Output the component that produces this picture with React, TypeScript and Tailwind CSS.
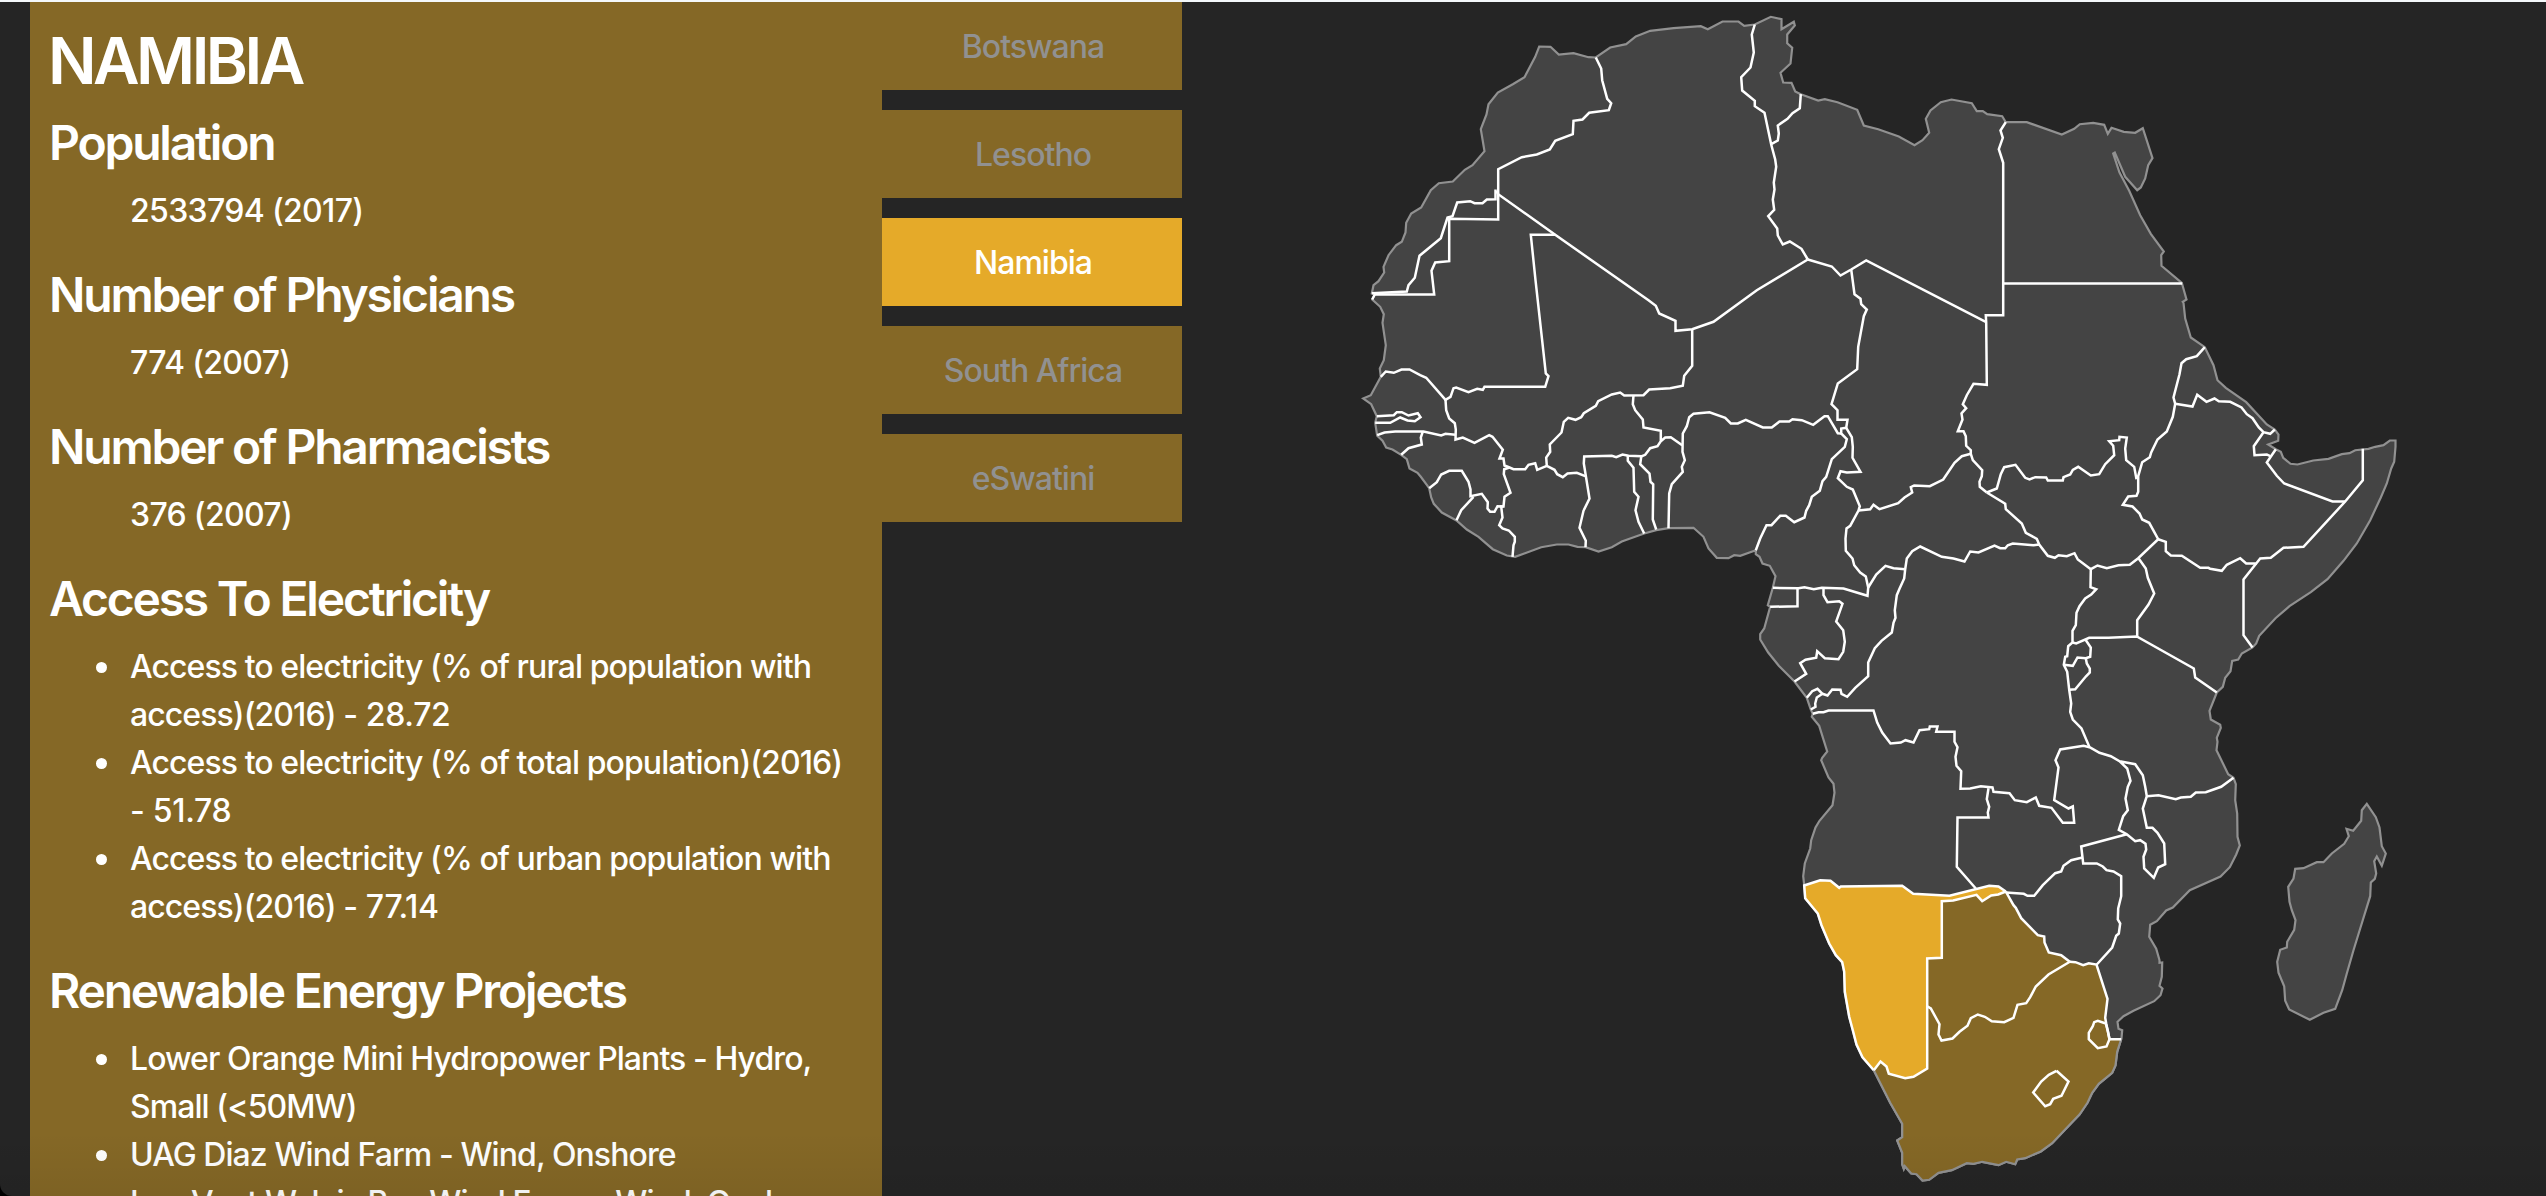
import React, { useState } from "react";

type Segment = [ox: number, oy: number, points: string];

/* Geometry is digitised in tiles at three units per pixel; each segment names its tile origin. */
const NW = [1340, 0] as const;
const NE = [1720, 0] as const;
const RS = [2150, 260] as const;
const WA = [1340, 280] as const;
const CE = [1740, 300] as const;
const HO = [2040, 300] as const;
const CO = [1740, 580] as const;
const EA = [2020, 580] as const;
const SO = [1780, 860] as const;

const seg = (o: readonly [number, number], points: string): Segment => [o[0], o[1], points];

const project = (segments: Segment[]) =>
  segments
    .map(([ox, oy, points]) =>
      points
        .trim()
        .split(/\s+/)
        .map((p) => {
          const [x, y] = p.split(",").map(Number);
          return `${(ox + (x + 0.5) / 3).toFixed(1)},${(oy + (y + 0.5) / 3).toFixed(1)}`;
        })
        .join(" "),
    )
    .join(" ");

const reversed = (points: string) => points.split(" ").reverse().join(" ");

const southCoast =
  "1023,537 1011,575 1006,616 996,638 956,671 936,698 922,728 898,763 850,813 816,849 782,874 735,894 711,898 705,912 678,905 655,915 606,905 580,911 560,909 515,930 475,938 447,959 427,961 409,942 393,940 374,918 371,926 366,912 366,878 351,841 366,831 366,791 330,728 281,630";
const namibiaCoast =
  "281,630 247,591 229,553 218,510 207,470 194,395 192,335 186,306 167,285 147,250 124,195 113,160 75,114 72,76";
const namibiaNorth =
  "72,76 120,60 151,62 177,83 182,79 366,77 399,101 508,107 627,77 655,79 677,94";
const capriviSouth = "677,94 654,103 633,106 606,123 589,104 519,121 485,123 485,293 441,295 441,438";
const orangeRiver = "441,438 441,625 400,650 375,654 326,641 319,619 301,604 281,630";
const zimBotswana =
  "677,94 700,135 707,143 723,174 773,225 792,229 793,247 806,277 843,285 869,305";
const molopo =
  "869,305 805,343 767,379 750,411 738,429 712,434 700,473 672,486 635,483 614,470 593,463 572,474 562,497 538,515 517,535 484,541 475,523 478,492 452,445 441,438";
const limpopoEast = "869,305 886,306 909,315 926,309 949,313 982,416 975,473 978,490 988,537 1023,537";
const eswatini =
  "977,490 953,482 942,486 938,498 926,518 926,537 953,564 979,559 988,537 983,512";
const lesotho =
  "829,632 865,664 844,707 819,716 810,732 795,738 759,697 783,664 806,644";

const coast: Segment[] = [
  seg(
    NW,
    "95,880 100,855 115,843 132,817 130,800 145,765 168,735 185,725 196,697 198,668 213,640 243,622 272,570 296,549 338,544 374,509 397,495 433,453 422,387 439,343 445,312 473,277 518,252 553,231 585,170 597,139 631,140 656,163 700,159 745,171 767,172 810,142 858,132 887,109 930,92 1000,84 1082,78 1103,87 1147,64 1195,64",
  ),
  seg(
    NE,
    "55,64 72,77 104,73 152,50 184,57 184,87 221,65 224,76 201,103 201,129 216,143 211,190 181,218 189,247 214,248 225,274 242,282 294,301 314,297 352,306 411,329 431,376 474,387 536,409 583,435 607,420 627,398 617,356 631,331 662,306 694,298 755,309 770,333 788,333 801,342 846,348 857,366 920,366 1025,403 1062,386 1079,372 1119,368 1152,374 1163,401 1174,383 1211,395 1245,398 1268,384 1297,474 1284,495 1275,535 1262,562 1251,570 1215,530 1184,457 1179,460 1198,517 1227,572 1260,645 1292,701 1331,754 1323,765 1324,797",
  ),
  seg(RS, "95,68 109,118 98,125"),
  seg(
    HO,
    "430,8 435,55 452,112 494,141 520,195 532,240 557,263 618,306 680,373 704,388 715,403 714,422 684,433 707,447 722,455 729,473 751,491 772,493 819,481 865,476 905,462 928,459 945,450 985,446 1005,440 1030,435 1049,421 1066,421 1066,440 1062,485 1053,505 1040,550 1022,592 990,660 950,730 910,782 862,837 812,876 748,918 706,954 657,1007 648,1030 637,1042",
  ),
  seg(
    EA,
    "697,202 665,220 654,238 636,242 631,273 615,293 608,320 590,337 568,392 572,418 600,434 602,443 590,473 592,485 589,510 624,582 640,593 647,612 645,660 651,700 652,770 659,796 648,823 629,861 601,889 509,930 458,982 438,991 410,1023 390,1034 387,1070 408,1106 418,1140 418,1148 426,1147 425,1190 418,1217 427,1225 421,1245 402,1263 340,1292 310,1308 292,1325 295,1346 306,1350 304,1375",
  ),
  seg(SO, southCoast),
  seg(SO, namibiaCoast),
  seg(
    CO,
    "192,915 189,888 194,850 210,805 213,780 226,742 238,722 277,675 283,638 280,611 265,592 243,540 246,533 261,514 237,437 215,410 218,401 212,388 200,353 163,304 116,257 84,217 60,178 60,162 72,145 90,80 83,75 98,23",
  ),
  seg(CE, "106,828 89,797 67,790 58,770 47,762 47,750"),
  seg(
    WA,
    "1200,827 1182,825 1165,834 1130,833 1105,805 1090,770 1060,743 985,744 948,750 912,760 845,784 815,801 775,814 736,801 712,800 685,793 650,793 603,801 525,830 500,826 458,807 415,770 380,748 349,721 305,697 281,671 273,652 267,624 242,590 232,578 208,565 200,537 183,524 157,508 138,502 127,482 111,467 105,428 110,408 93,372 69,355 92,345 122,290 119,265 131,240 137,195 127,128 131,102 120,80 96,58 104,42",
  ),
];

const madagascar: Segment[] = [
  seg(
    EA,
    "1040,671 1067,711 1078,742 1085,798 1097,820 1085,857 1070,829 1062,843 1068,880 1064,896 1052,907 1050,948 1020,1045 1000,1110 980,1180 966,1230 945,1286 910,1298 869,1319 807,1288 795,1262 792,1218 775,1178 771,1145 780,1109 800,1102 801,1085 822,1049 826,1020 815,990 808,965 804,920 820,895 825,866 850,864 890,846 910,846 935,820 972,791 986,768 979,746 999,752 1023,722 1025,690",
  ),
];

const borders: Segment[][] = [
  /* north-west */
  [seg(NW, "767,172 783,205 786,240 801,296 813,309 806,330 747,338 727,358 700,362 698,402 645,422 629,448 590,463 545,471 474,507 474,658 327,656 327,783 285,787 274,812 282,883 104,883 96,898")],
  [seg(NW, "95,879 200,874 205,855 224,833 238,767 302,714 322,652 337,648 351,607 390,603 403,609 427,609 440,598 466,597 466,568")],
  [
    seg(NW, "468,572 474,582 645,704 925,900"),
    seg(WA, "947,77 957,100 1006,122 1006,152 1056,147 1120,125"),
    seg(NE, "110,870 263,778"),
  ],
  [
    seg(NW, "645,704 572,704 586,840"),
    seg(WA, "617,280 625,288 615,320 433,320 428,329 411,326 385,336 348,322 340,324 331,350 316,359 258,293 240,285 208,268 184,268 161,278 137,274 122,290"),
  ],
  /* west */
  [seg(WA, "316,359 318,390 327,415 344,429 347,448 346,478 368,472 403,488 447,465 457,470 488,509 478,535 490,535 493,556 508,562 520,567 555,567 565,554 585,549 591,569 620,557")],
  [seg(WA, "620,557 618,532 630,515 629,493 664,457 671,425 684,413 706,419 723,411 731,399 767,377 774,363 815,343 840,337 852,346 910,345 927,328 990,324 1028,317 1032,287 1056,257 1056,147")],
  [seg(WA, "110,408 161,405 170,396 185,396 205,406 233,399 241,411 224,423 202,421 180,412 150,428 105,428")],
  [seg(WA, "111,465 133,457 165,454 250,454 303,466 316,461 346,464")],
  [seg(WA, "248,454 242,472 245,493 205,504 183,524")],
  [seg(WA, "267,624 290,606 303,583 327,572 365,572 385,605 391,628 391,648 425,641 443,666 442,685 450,695 463,695 472,678 490,679")],
  [seg(WA, "349,720 363,690 400,650")],
  [seg(WA, "508,562 492,567 491,582 511,638 493,650 490,679 483,679 487,712 477,735 487,745 506,751 524,770 524,785 520,795 517,830")],
  [seg(WA, "620,557 643,569 651,582 668,591 682,580 710,578 735,588")],
  [seg(WA, "736,801 737,782 718,743 730,692 748,655 731,550 732,529 815,527 828,531 847,523 865,527 905,528 915,524 930,504 952,498 962,483 962,452 910,442 908,418 885,390 878,372 880,345")],
  [seg(WA, "863,527 863,542 880,563 882,635 895,650 886,690 895,725 912,760")],
  [seg(WA, "903,530 900,552 928,580 931,605 939,612 938,718 948,748")],
  [seg(WA, "962,483 975,472 992,471 1026,495")],
  [
    seg(WA, "985,744 987,640 995,612 1028,575 1025,560 1034,540 1027,515 1028,460 1040,438 1047,411 1060,401 1108,396 1155,413 1172,430 1193,430 1217,419"),
    seg(CE, "68,382 95,382 118,364 147,364 157,357 185,360 219,374 253,348 263,348 293,399 303,400"),
  ],
  /* north and centre */
  [
    seg(NE, "393,808 403,882 421,896 423,912 440,928"),
    seg(CE, "371,48 354,140 351,207 293,250 274,312 292,330 292,359 322,359 318,383 303,385 303,400 320,417 314,440 275,477 258,530 247,543 239,572 215,590 207,615 198,632 193,652 162,666 137,647 120,647 94,675 79,675 60,715 47,750"),
  ],
  [seg(CE, "318,383 335,411 338,440 337,473 361,515 320,517 301,513 293,534 320,560 338,568 359,618 355,631 330,677 319,685 316,715 317,752 337,775 342,795 360,817 377,829 384,862 382,887 310,865 245,863 221,867 193,861 175,864 98,863")],
  [seg(CE, "355,631 390,627 400,614 418,627 474,609 493,592 516,577 512,561 522,556 569,558 609,538 643,488 665,468 692,461")],
  [seg(NE, "263,778 335,799 361,826 393,808 438,781"), seg(CE, "738,66")],
  [
    seg(NE, "857,366 841,391 848,413 836,447 849,488 849,945 797,945"),
    seg(CE, "738,66 740,254 700,251 680,285 668,312 678,324 664,340 667,358 653,393 670,393 677,408 678,437 692,450 692,461 698,480 726,510 725,528 718,545 719,560 740,577"),
  ],
  [seg(NE, "849,850 1386,850")],
  [seg(NE, "104,73 95,103 101,157 91,202 63,231 66,271 104,302 104,318 133,338 153,433 165,478 168,500 161,547 163,568 158,598 162,629 144,648 171,685 173,706 188,733 209,724 244,746 263,778")],
  [seg(NE, "242,282 239,324 217,339 202,356 173,376 176,400 173,421 153,432")],
  [
    seg(CE, "740,577 770,565 782,522 792,501 826,494 855,533 868,538 885,531 918,532 923,541 968,541 970,531 990,523 998,509"),
    seg(HO, "114,500 152,526 177,522 195,492 222,465 219,437 207,423 237,420 238,410 260,412 255,445 258,480 282,500 289,537"),
  ],
  [
    seg(CE, "740,577 795,611 797,627 845,670 857,698 890,716 897,733 923,767 944,773 955,765 980,768"),
    seg(HO, "103,759 113,778 152,807 172,796 200,804 235,795 269,794 294,774 354,717 327,668 306,658 298,640 277,619 248,614 264,589 289,587 294,575 294,528 306,486 329,471 333,457 352,418 380,394 398,350 405,311 400,292 418,222 424,189 438,177 470,168 494,141"),
  ],
  /* horn */
  [seg(HO, "405,311 457,319 471,284 499,305 523,295 536,303 570,305 604,322 620,342 637,354 656,382 670,396 690,401 704,388")],
  [seg(HO, "670,396 641,438 643,465 680,463 690,468")],
  [seg(HO, "707,447 680,487 710,527 732,550 877,604 915,604")],
  [seg(HO, "968,446 968,540 915,604 790,740 730,743 692,773 660,775 648,790 618,790 600,774 560,794 545,812 510,806 505,803 480,803 425,767 392,766 377,753 377,725 354,717")],
  [seg(HO, "648,790 610,838 610,1005 637,1042")],
  [seg(HO, "295,774 317,805 323,833 342,880 325,913 291,960 291,1010")],
  /* congo basin */
  [
    seg(CE, "897,733 880,735 818,730 803,735 795,744 780,744 763,736 715,757 690,754 673,784 640,775 605,770 540,739 516,753 500,775 495,807 492,835 478,866"),
    seg(CO, "470,45 464,90 466,113 460,128 455,157 424,182 404,204 384,247 384,288 345,323 321,350 304,341 301,329 276,328 262,346 247,341 232,326 216,333 200,353"),
  ],
  [seg(CE, "495,807 460,804 436,797 408,823 384,862")],
  [seg(CO, "247,341 230,352 225,370 226,380 212,388")],
  [seg(CO, "172,25 172,78 90,80")],
  [seg(CO, "250,22 250,45 262,66 297,63 307,71 288,124 309,150 314,185 309,215 295,237 254,234 231,213 228,233 196,239 180,249 198,281 163,304")],
  [
    seg(CO, "218,401 235,396 250,396 265,391 400,391 411,427 426,457 451,490 482,487 496,480 520,487 538,450 567,447 569,439 592,439 588,455 643,455 643,485 652,501 646,530 649,557 663,573 661,626 690,625 722,618 757,622 760,635 808,639 824,660 860,666 887,652 897,677 934,683 968,728 1002,728 998,679 985,685 942,660 955,562 946,540 960,508"),
    seg(EA, "190,497 208,501"),
  ],
  [seg(CO, "745,624 740,657 747,680 743,697 745,712 652,712 650,860 707,925")],
  /* east */
  [
    seg(HO, "152,807 151,861 168,867 153,883 135,895 118,918 109,938 107,975 97,992 97,1027"),
    seg(EA, "144,198 141,228 135,230 131,254 141,275 147,329 153,370 150,395 158,418 184,445 208,501 238,518 272,528 298,543 321,565 331,602 323,620 316,655 323,690 309,708 296,749 320,762 345,783 360,780 376,791 378,808 370,830 372,865 401,893 414,862 435,852 432,790 412,758 397,743 380,743 368,685 380,648 375,620 368,585 345,552 298,543"),
  ],
  [seg(EA, "157,187 168,190 207,173 265,173 350,169 521,265 525,292 590,337")],
  [seg(EA, "195,177 212,202 210,230 197,234 172,232 158,257 131,254")],
  [seg(EA, "197,234 200,250 209,265 209,277 197,289 165,327 147,329")],
  [seg(EA, "380,648 415,645 467,657 482,652 512,650 527,637 557,636 603,620 640,593")],
  [seg(EA, "320,762 183,799 189,850 230,850 248,859 259,870 280,874 303,888 303,948 294,985 293,1018 300,1030 296,1060 288,1067 276,1102 230,1153")],
  [
    seg(EA, "187,832 153,840 130,857 123,874 105,879 68,915 42,947 22,947"),
    seg(CO, "851,941 797,937"),
  ],
  /* south */
  [seg(SO, zimBotswana)],
  [seg(SO, molopo)],
  [seg(SO, limpopoEast)],
  [seg(SO, capriviSouth + " " + orangeRiver)],
  [seg(SO, namibiaCoast + " " + namibiaNorth)],
  [seg(SO, eswatini + " 977,490")],
  [seg(SO, lesotho + " 829,632")],
];

const southAfrica = [
  seg(SO, reversed(orangeRiver)),
  seg(SO, reversed(molopo)),
  seg(SO, limpopoEast),
  seg(SO, southCoast),
];
const botswana = [seg(SO, zimBotswana), seg(SO, molopo), seg(SO, reversed(capriviSouth))];
const namibia = [seg(SO, namibiaNorth), seg(SO, capriviSouth), seg(SO, orangeRiver), seg(SO, namibiaCoast)];

const regions: { name: string; shape: Segment[] }[] = [
  { name: "South Africa", shape: southAfrica },
  { name: "Botswana", shape: botswana },
  { name: "Namibia", shape: namibia },
  { name: "eSwatini", shape: [seg(SO, eswatini)] },
  { name: "Lesotho", shape: [seg(SO, lesotho)] },
];

function AfricaMap({ selected }: { selected: string }) {
  return (
    <svg viewBox="1182 2 1364 1194" className="block h-full w-[1364px] flex-none">
      <g className="fill-[#444444] stroke-[#919191]" strokeWidth={2.2}>
        <polygon points={project(coast)} />
        <polygon points={project(madagascar)} />
      </g>
      {regions.map((r) => (
        <polygon
          key={r.name}
          points={project(r.shape)}
          className={r.name === selected ? "fill-[#e5aa29]" : "fill-[#856826]"}
        />
      ))}
      <polyline points={project([seg(SO, southCoast)])} className="fill-none stroke-[#919191]" strokeWidth={2.2} />
      <g className="fill-none stroke-white" strokeWidth={2.5}>
        {borders.map((b, i) => (
          <polyline key={i} points={project(b)} />
        ))}
      </g>
    </svg>
  );
}

type Item = { text: string; value?: string };

function Section({ title, items, bullets }: { title: string; items: Item[]; bullets?: boolean }) {
  return (
    <section className="mb-8">
      <h2 className="mb-4 -ml-px text-[48px] leading-[56px] font-semibold tracking-[-0.046em]">{title}</h2>
      <ul className={bullets ? "pl-20 tracking-[-0.029em]" : "pl-20 tracking-[-0.021em]"}>
        {items.map((item) => (
          <li
            key={item.text}
            className={
              bullets
                ? "relative before:absolute before:top-[19px] before:-left-[34px] before:size-[11px] before:rounded-full before:bg-white"
                : ""
            }
          >
            {item.text}
            {item.value && (
              <>
                {" "}
                <span className="tracking-[-0.01em] whitespace-nowrap">- {item.value}</span>
              </>
            )}
          </li>
        ))}
      </ul>
    </section>
  );
}

const countries = ["Botswana", "Lesotho", "Namibia", "South Africa", "eSwatini"];

export default function App() {
  const [selected, setSelected] = useState("Namibia");
  return (
    <div className="h-[1196px] w-[2546px] bg-black">
      <div className="relative flex h-full flex-col overflow-hidden rounded-bl-[12px] bg-[#252525] font-['Inter',sans-serif]">
        <div className="h-[2px] flex-none bg-[#f4f8fa]" />
        <main className="flex min-h-0 flex-1 pl-[30px]">
          <article className="w-[852px] flex-none overflow-hidden bg-[#856826] px-5 pt-[21px] text-[32px] leading-[48px] font-medium text-white">
            <h1 className="mb-4 -ml-0.5 text-[64px] leading-[76px] font-semibold tracking-[-0.055em]">NAMIBIA</h1>
            <Section title="Population" items={[{ text: "2533794 (2017)" }]} />
            <Section title="Number of Physicians" items={[{ text: "774 (2007)" }]} />
            <Section title="Number of Pharmacists" items={[{ text: "376 (2007)" }]} />
            <Section
              bullets
              title="Access To Electricity"
              items={[
                { text: "Access to electricity (% of rural population with access)(2016)", value: "28.72" },
                { text: "Access to electricity (% of total population)(2016)", value: "51.78" },
                { text: "Access to electricity (% of urban population with access)(2016)", value: "77.14" },
              ]}
            />
            <Section
              bullets
              title="Renewable Energy Projects"
              items={[
                { text: "Lower Orange Mini Hydropower Plants - Hydro, Small (<50MW)" },
                { text: "UAG Diaz Wind Farm - Wind, Onshore" },
                { text: "InnoVent Walvis Bay Wind Farm - Wind, Onshore" },
              ]}
            />
          </article>
          <nav className="flex w-[300px] flex-none flex-col gap-5 text-[32px] font-medium tracking-[-0.031em]">
            {countries.map((c) => (
              <button
                key={c}
                onClick={() => setSelected(c)}
                className={
                  c === selected
                    ? "h-[88px] bg-[#e5aa29] pt-0.5 pl-0.5 text-white"
                    : "h-[88px] bg-[#856826] pt-0.5 pl-0.5 text-[#919191]"
                }
              >
                {c}
              </button>
            ))}
          </nav>
          <AfricaMap selected={selected} />
        </main>
        <div className="pointer-events-none absolute inset-x-0 bottom-0 h-16 bg-linear-to-t from-black/6 to-transparent" />
      </div>
    </div>
  );
}
